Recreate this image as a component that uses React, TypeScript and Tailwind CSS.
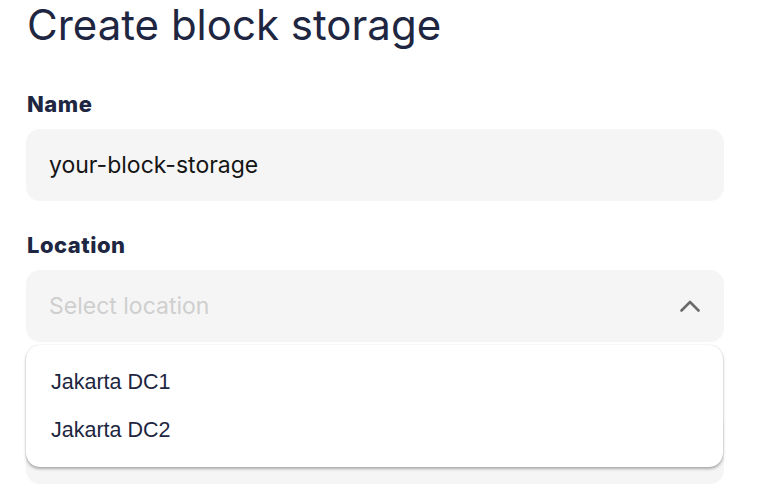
import { useState } from "react";

const locations = ["Jakarta DC1", "Jakarta DC2"];

const ChevronUp = () => (
  <svg width="20" height="12" viewBox="0 0 20 12" fill="none">
    <polyline
      points="1.5,10.5 10,2 18.5,10.5"
      stroke="#6b6b6b"
      strokeWidth="2.6"
      strokeLinecap="round"
      strokeLinejoin="round"
    />
  </svg>
);

export default function App() {
  const [name] = useState("your-block-storage");

  return (
    <div className="min-h-[497px] w-[758px] bg-white font-['Inter',sans-serif]">
      <div className="w-[698px] ml-[26px]">
        <h1 className="text-[42px] leading-[50px] font-normal text-[#1e2641] pl-[1px]">
          Create block storage
        </h1>

        <label className="block mt-[40px] mb-[11px] text-[22px] leading-[28px] font-extrabold text-[#1e2641] tracking-[0.5px] pl-[1px]">
          Name
        </label>
        <div className="h-[72px] rounded-[14px] bg-[#f5f5f5] flex items-center px-[23px]">
          <span className="text-[23px] text-[#151515]">{name}</span>
        </div>

        <label className="block mt-[30px] mb-[11px] text-[22px] leading-[28px] font-extrabold text-[#1e2641] tracking-[0.5px] pl-[1px]">
          Location
        </label>
        <div className="relative">
          <div className="h-[72px] rounded-[14px] bg-[#f5f5f5] flex items-center justify-between pl-[23px] pr-[24px]">
            <span className="text-[23px] text-[#cfcfcf]">Select location</span>
            <ChevronUp />
          </div>

          <div className="absolute left-0 right-[1px] top-[75px] z-10 rounded-[14px] bg-white pt-[13px] pb-[13px] shadow-[0_2px_3px_rgba(0,0,0,0.3),0_0_1px_rgba(0,0,0,0.2)] font-['Liberation_Sans',Arial,sans-serif]">
            {locations.map((loc) => (
              <div
                key={loc}
                className="h-[48px] leading-[48px] px-[25px] text-[21.5px] text-[#1e2641]"
              >
                {loc}
              </div>
            ))}
          </div>

          <div className="mt-[70px] h-[72px] rounded-[14px] bg-[#f5f5f5]" />
        </div>
      </div>
    </div>
  );
}
